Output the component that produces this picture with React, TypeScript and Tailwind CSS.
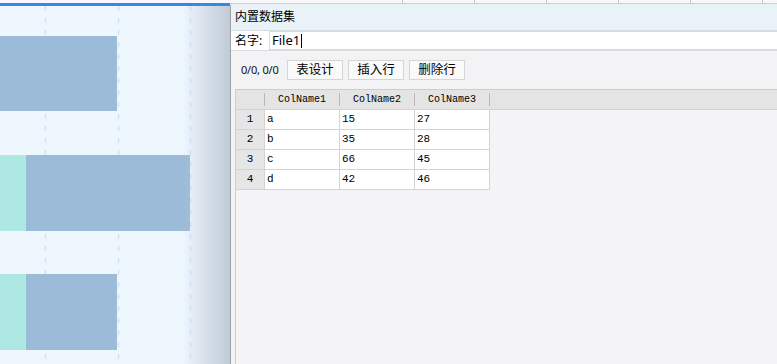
import React from "react";

const cols = ["ColName1", "ColName2", "ColName3"];
const rows = [
  ["a", "15", "27"],
  ["b", "35", "28"],
  ["c", "66", "45"],
  ["d", "42", "46"],
];

function Chart() {
  return (
    <svg width="230" height="358" viewBox="0 0 230 358" className="block">
      <rect x="0" y="0" width="230" height="358" fill="#eef6fe" />
      {[45.5, 118.5, 190.5].map((x) => (
        <line key={x} x1={x} y1="0" x2={x} y2="358" stroke="#d3e2f1" strokeWidth="1.5" strokeDasharray="5 7" />
      ))}
      <rect x="0" y="30" width="117" height="75" fill="#9bbbd8" />
      <rect x="0" y="149" width="26" height="76" fill="#aee8e3" />
      <rect x="26" y="149" width="164" height="76" fill="#9bbbd8" />
      <rect x="0" y="268" width="26" height="76" fill="#aee8e3" />
      <rect x="26" y="268" width="91" height="76" fill="#9bbbd8" />
    </svg>
  );
}

export default function App() {
  const ui = { fontFamily: '"Noto Sans", "Noto Sans CJK SC", sans-serif' };
  const mono = { fontFamily: '"Liberation Mono", "DejaVu Sans Mono", monospace' };
  return (
    <div className="w-[777px] h-[364px] flex overflow-hidden bg-[#eef6fe]" style={ui}>
      <div className="w-[230px] flex flex-col shrink-0">
        <div className="h-[3px] bg-[#f6f9fc]" />
        <div className="h-[3px] bg-[#3a85e6]" />
        <div className="relative flex-1">
          <Chart />
          <div className="absolute right-0 top-0 bottom-0 w-[48px] bg-gradient-to-r from-[#eef6fe00] to-[#c0cbd6]" />
        </div>
      </div>
      <div className="flex-1 flex flex-col min-w-0">
        <div className="h-[4px] flex bg-[#f8f8f8] border-b border-[#cfcfcf]">
          <div className="w-[173px] border-r border-[#c4c4c4]" />
          {[0, 1, 2, 3, 4].map((i) => (
            <div key={i} className="w-[72px] border-r border-[#c4c4c4]" />
          ))}
        </div>
        <div className="flex-1 flex flex-col border-l border-[#9ea3a8] bg-[#f3f3f5] rounded-tl-[3px] overflow-hidden">
          <div className="h-[27px] bg-[#e9f3f7] border-b border-[#d7dee3] flex items-center pl-[4px] text-[12px] text-black">
            内置数据集
          </div>
          <div className="h-[19px] bg-white flex items-stretch">
            <div className="w-[38px] pl-[4px] flex items-center text-[12px] text-black">名字:</div>
            <div className="flex-1 border border-r-0 border-[#d9d9d9] flex items-center pl-[2px] text-[13px] text-black">
              File1
              <span className="inline-block w-[1px] h-[14px] bg-black ml-[1px]" />
            </div>
          </div>
          <div className="h-[39px] border-t border-[#dcdcdc] flex items-center pl-[10px]">
            <span className="text-[11px] text-[#111] w-[46px] tracking-[-0.2px]">0/0, 0/0</span>
            <div className="flex gap-[5px]">
              {["表设计", "插入行", "删除行"].map((b) => (
                <div key={b} className="w-[56px] h-[20px] bg-[#fafafa] border border-[#d6d6d6] flex items-center justify-center text-[12.5px] text-black">
                  {b}
                </div>
              ))}
            </div>
          </div>
          <div className="flex-1 ml-[4px] border-l border-t border-[#cdcdcd] bg-[#f4f4f6] flex flex-col" style={mono}>
            <div className="h-[20px] bg-[#e4e4e4] border-b border-[#d2d2d2] flex text-[10px] text-black">
              <div className="w-[29px] flex items-center justify-end">
                <span className="w-[1px] h-[13px] bg-[#b8b8b8]" />
              </div>
              {cols.map((c) => (
                <div key={c} className="w-[75px] flex items-center">
                  <span className="flex-1 text-center">{c}</span>
                  <span className="w-[1px] h-[13px] bg-[#b8b8b8]" />
                </div>
              ))}
            </div>
            {rows.map((r, i) => (
              <div key={i} className="h-[20px] flex text-[11px] text-black">
                <div className="w-[29px] bg-[#e6e6e6] border-b border-r border-[#d4d4d4] flex items-center justify-center">
                  {i + 1}
                </div>
                {r.map((v, j) => (
                  <div key={j} className="w-[75px] bg-white border-b border-r border-[#d4d4d4] flex items-center pl-[2px]">
                    {v}
                  </div>
                ))}
              </div>
            ))}
          </div>
        </div>
      </div>
    </div>
  );
}
